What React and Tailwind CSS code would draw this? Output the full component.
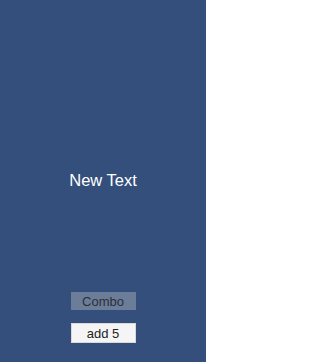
import React from 'react';

const App = () => {
    return (
        <div className="flex h-[362px] w-[206px] flex-col items-center bg-[#344f7b] font-['Liberation_Sans',Arial,sans-serif]">
            <div className="pt-[172px]">
                <span className="block text-[16.5px] leading-none text-white">New Text</span>
            </div>
            <div className="flex-1" />
            <div className="flex flex-col items-center gap-[13px] pb-[19px]">
                <div className="flex h-[18px] w-[65px] items-center justify-center bg-[#6b7d99] text-[13px] leading-none text-[#2b2f38]">
                    Combo
                </div>
                <button className="flex h-[20px] w-[65px] items-center justify-center border border-[#d9d9d9] bg-[#f5f5f5] text-[13px] leading-none text-[#222]">
                    add 5
                </button>
            </div>
        </div>
    );
};

export default App;
